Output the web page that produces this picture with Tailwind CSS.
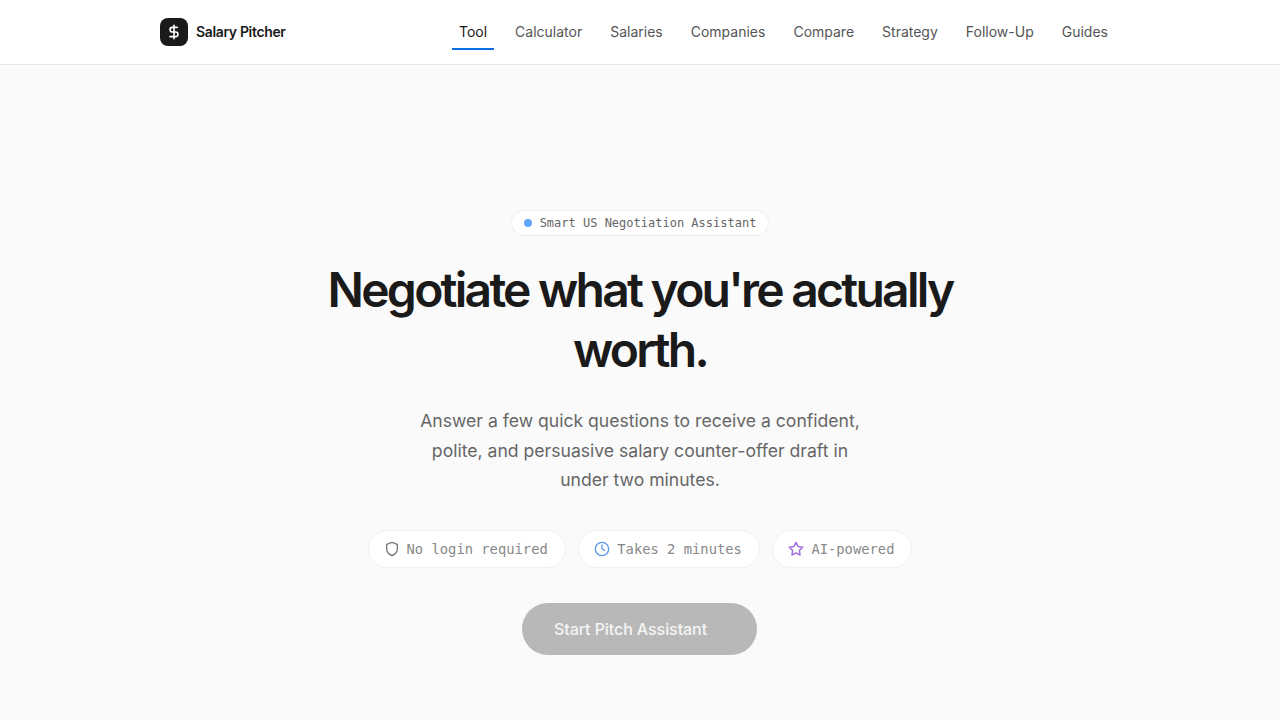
<!DOCTYPE html>
<html lang="en">
<head>
    <meta charset="UTF-8">
    <meta name="viewport" content="width=device-width, initial-scale=1.0">
    <title>Salary Pitcher</title>
    <script src="https://cdn.jsdelivr.net/npm/@tailwindcss/browser@4"></script>
</head>
<body class="bg-[#fafafa] font-['Inter',sans-serif] h-[720px] overflow-hidden">

    <!-- Header -->
    <header class="h-[65px] bg-white border-b border-[#e8e8e8]">
        <div class="w-[960px] mx-auto h-[64px] flex items-center justify-between pr-[5px]">
            <div class="flex items-center gap-2">
                <div class="w-7 h-7 rounded-lg bg-[#1a1a1a] flex items-center justify-center">
                    <svg class="w-4 h-4" viewBox="0 0 24 24" fill="none" stroke="white" stroke-width="2.4" stroke-linecap="round" stroke-linejoin="round">
                        <line x1="12" y1="2" x2="12" y2="22"></line>
                        <path d="M17 5H9.5a3.5 3.5 0 0 0 0 7h5a3.5 3.5 0 0 1 0 7H6"></path>
                    </svg>
                </div>
                <span class="text-sm font-semibold tracking-[-0.35px] text-[#1a1a1a]">Salary Pitcher</span>
            </div>
            <nav class="flex items-center gap-[14px] text-sm text-[#555555] h-full">
                <a class="h-full flex items-center px-[7px] text-[#1a1a1a] relative">Tool<span class="absolute left-0 right-0 bottom-[14px] h-0.5 bg-[#0a6fe0]"></span></a>
                <a class="h-full flex items-center px-[7px]">Calculator</a>
                <a class="h-full flex items-center px-[7px]">Salaries</a>
                <a class="h-full flex items-center px-[7px]">Companies</a>
                <a class="h-full flex items-center px-[7px]">Compare</a>
                <a class="h-full flex items-center px-[7px]">Strategy</a>
                <a class="h-full flex items-center px-[7px]">Follow-Up</a>
                <a class="h-full flex items-center px-[7px]">Guides</a>
            </nav>
        </div>
    </header>

    <!-- Hero -->
    <main class="flex flex-col items-center pt-[145px]">
        <div class="h-[26px] flex items-center gap-2 px-[12px] bg-white border border-[#eeeeee] rounded-full">
            <span class="w-2 h-2 rounded-full bg-[#60a5fa]"></span>
            <span class="font-['DejaVu_Sans_Mono',monospace] text-xs text-[#666666]">Smart US Negotiation Assistant</span>
        </div>

        <h1 class="mt-[24px] w-[700px] text-center text-[48px] leading-[60px] font-semibold tracking-[-2.76px] text-[#1a1a1a]">Negotiate what you're actually worth.</h1>

        <p class="mt-[26px] w-[460px] text-center text-[17.6px] leading-[29.5px] text-[#666666]">Answer a few quick questions to receive a confident, polite, and persuasive salary counter-offer draft in under two minutes.</p>

        <div class="mt-[35px] flex items-center gap-[12.5px] font-['DejaVu_Sans_Mono',monospace] text-[13.8px] text-[#888888]">
            <div class="h-[38px] flex items-center gap-[7px] pl-[15px] pr-[17px] bg-white border border-[#f0f0f0] rounded-full">
                <svg class="w-4 h-4" viewBox="0 0 24 24" fill="none" stroke="#777777" stroke-width="2" stroke-linecap="round" stroke-linejoin="round">
                    <path d="M12 22s8-3.500 8-10V5l-8-3-8 3v7c0 6.500 8 10 8 10z"></path>
                </svg>
                <span class="pt-px">No login required</span>
            </div>
            <div class="h-[38px] flex items-center gap-[7px] pl-[15px] pr-[17px] bg-white border border-[#f0f0f0] rounded-full">
                <svg class="w-4 h-4" viewBox="0 0 24 24" fill="none" stroke="#5a9ae8" stroke-width="2" stroke-linecap="round" stroke-linejoin="round">
                    <circle cx="12" cy="12" r="10"></circle>
                    <path d="M12 6v6l4 2"></path>
                </svg>
                <span class="pt-px">Takes 2 minutes</span>
            </div>
            <div class="h-[38px] flex items-center gap-[7px] pl-[15px] pr-[17px] bg-white border border-[#f0f0f0] rounded-full">
                <svg class="w-4 h-4" viewBox="0 0 24 24" fill="none" stroke="#a070e0" stroke-width="2.2" stroke-linecap="round" stroke-linejoin="round">
                    <path d="M12 2l3.090 6.260L22 9.270l-5 4.870 1.180 6.880L12 17.770l-6.180 3.250L7 14.140 2 9.270l6.910-1.010L12 2z"></path>
                </svg>
                <span class="pt-px">AI-powered</span>
            </div>
        </div>

        <button class="mt-[35px] -ml-px w-[235px] h-[52px] pl-8 text-left rounded-full bg-[#b8b8b8] text-white/85 text-base font-medium tracking-[-0.08px]">Start Pitch Assistant</button>
    </main>

</body>
</html>
